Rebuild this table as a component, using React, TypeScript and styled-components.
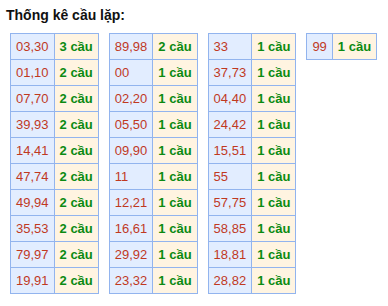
import React from "react";
import styled, { createGlobalStyle } from "styled-components";

const Global = createGlobalStyle`
  html, body { margin: 0; padding: 0; background: #ffffff; }
  body { font-family: Arial, "Liberation Sans", sans-serif; }
`;

const Page = styled.div`
  padding: 7px 0 0 6px;
`;

const Title = styled.div`
  font-size: 14px;
  font-weight: bold;
  color: #111111;
  line-height: 16px;
  margin: 0 0 10px 0;
`;

const Tables = styled.div`
  display: flex;
  align-items: flex-start;
  gap: 10px;
  margin-left: 4px;
`;

const Table = styled.table`
  border-collapse: collapse;
  border: 1px solid #92b4ee;
`;

const Cell = styled.td<{ $kind: "num" | "count" }>`
  border: 1px solid #92b4ee;
  height: 26px;
  padding: 0 5px;
  box-sizing: border-box;
  font-size: 13px;
  line-height: 15px;
  vertical-align: middle;
  text-align: left;
  white-space: nowrap;
  background: ${(p) => (p.$kind === "num" ? "#e2edff" : "#fff4e1")};
  color: ${(p) => (p.$kind === "num" ? "#c0391f" : "#0b8a12")};
  font-weight: ${(p) => (p.$kind === "num" ? "normal" : "bold")};
`;

const data: [string, number][][] = [
  [
    ["03,30", 3],
    ["01,10", 2],
    ["07,70", 2],
    ["39,93", 2],
    ["14,41", 2],
    ["47,74", 2],
    ["49,94", 2],
    ["35,53", 2],
    ["79,97", 2],
    ["19,91", 2],
  ],
  [
    ["89,98", 2],
    ["00", 1],
    ["02,20", 1],
    ["05,50", 1],
    ["09,90", 1],
    ["11", 1],
    ["12,21", 1],
    ["16,61", 1],
    ["29,92", 1],
    ["23,32", 1],
  ],
  [
    ["33", 1],
    ["37,73", 1],
    ["04,40", 1],
    ["24,42", 1],
    ["15,51", 1],
    ["55", 1],
    ["57,75", 1],
    ["58,85", 1],
    ["18,81", 1],
    ["28,82", 1],
  ],
  [["99", 1]],
];

export default function App() {
  return (
    <>
      <Global />
      <Page>
        <Title>Thống kê cầu lặp:</Title>
        <Tables>
          {data.map((rows, i) => (
            <Table key={i}>
              <tbody>
                {rows.map(([num, n]) => (
                  <tr key={num}>
                    <Cell $kind="num">{num}</Cell>
                    <Cell $kind="count">{n} cầu</Cell>
                  </tr>
                ))}
              </tbody>
            </Table>
          ))}
        </Tables>
      </Page>
    </>
  );
}
